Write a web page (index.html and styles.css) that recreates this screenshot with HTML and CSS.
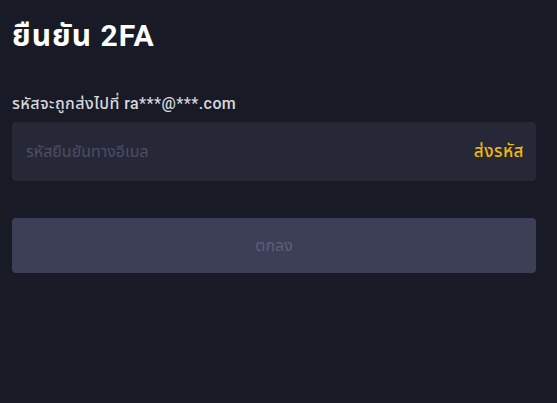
FILE: index.html
```html
<!DOCTYPE html>
<html lang="th">

<head>
    <meta charset="UTF-8">
    <meta name="viewport" content="width=device-width, initial-scale=1.0">
    <title>ยืนยัน 2FA</title>
    <link rel="stylesheet" href="styles.css">
</head>

<body>
    <div class="page">
        <h1 class="title">ยืนยัน 2FA</h1>
        <form class="verify" onsubmit="return false">
            <label class="hint" for="code">รหัสจะถูกส่งไปที่ ra***@***.com</label>
            <div class="field">
                <input id="code" type="text" placeholder="รหัสยืนยันทางอีเมล">
                <a class="send" href="javascript:;">ส่งรหัส</a>
            </div>
            <button class="submit" type="submit" disabled>ตกลง</button>
        </form>
    </div>
</body>

</html>
```

FILE: styles.css
```css
html,
body {
    margin: 0;
    padding: 0;
    height: 100%;
}

body {
    background: #181a25;
    color: #eaecef;
    font-family: Roboto, "Noto Sans", "Noto Sans Thai", sans-serif;
}

.page {
    padding: 16px 21px 0 12px;
}

.title {
    margin: 0;
    font-size: 30px;
    font-weight: 700;
    line-height: 40px;
    letter-spacing: 1px;
    color: #fff;
}

.verify {
    display: flex;
    flex-direction: column;
    margin-top: 38px;
}

.hint {
    font-size: 16px;
    font-weight: 500;
    line-height: 20px;
    letter-spacing: 0.4px;
    color: #d6d8de;
}

.field {
    display: flex;
    align-items: center;
    height: 59px;
    margin-top: 8px;
    padding: 0 12px;
    background: #262837;
    border-radius: 4px;
}

.field input {
    flex: 1;
    min-width: 0;
    border: 0;
    outline: 0;
    background: transparent;
    color: #eaecef;
    font: inherit;
    font-size: 16px;
}

.field input::placeholder {
    color: #4b4e63;
}

.send {
    color: #f0b90b;
    font-size: 17px;
    font-weight: 500;
    letter-spacing: 0.5px;
    text-decoration: none;
}

.submit {
    height: 55px;
    margin-top: 37px;
    border: 0;
    border-radius: 4px;
    background: #3c3f56;
    color: #5d6078;
    font: inherit;
    font-size: 16px;
}
```
